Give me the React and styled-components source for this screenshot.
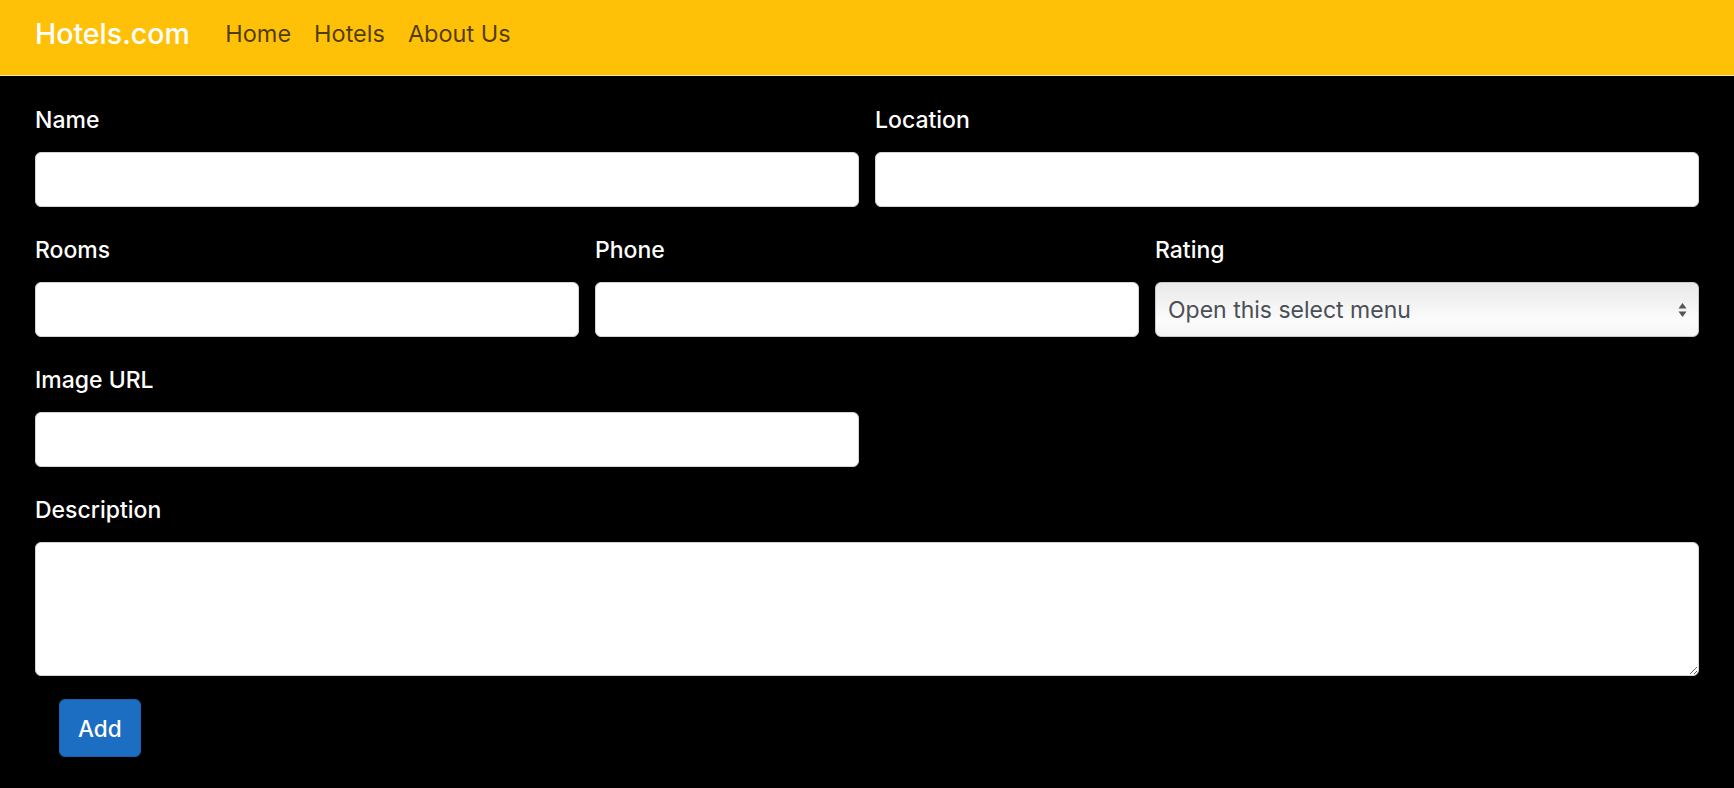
import React from 'react';
import styled, { createGlobalStyle } from 'styled-components';

const GlobalStyle = createGlobalStyle`
  body {
    margin: 0;
    background: #000;
    font-family: Inter, "Noto Sans", "Liberation Sans", sans-serif;
  }
  * {
    box-sizing: border-box;
  }
`;

const Navbar = styled.nav`
  display: flex;
  align-items: center;
  height: 76px;
  padding: 0 35px 8px;
  background-color: #ffc107;
  border-bottom: 1px solid #f3e3b0;
`;

const Brand = styled.a`
  font-size: 28.5px;
  font-weight: 500;
  color: #fff;
  text-decoration: none;
  margin-right: 24px;
`;

const NavLinks = styled.ul`
  display: flex;
  list-style: none;
  margin: 0;
  padding: 0;
`;

const NavLink = styled.a`
  display: block;
  padding: 0 11.5px;
  font-size: 23.5px;
  color: rgba(0, 0, 0, 0.7);
  text-decoration: none;
`;

const Main = styled.main`
  padding: 27px 35px;
`;

const Row = styled.div`
  display: grid;
  grid-template-columns: repeat(${props => props.cols}, 1fr);
  column-gap: 16px;
  margin-bottom: ${props => (props.last ? '23px' : '26px')};
`;

const Field = styled.div`
  display: flex;
  flex-direction: column;
`;

const Label = styled.label`
  font-size: 23px;
  line-height: 34px;
  font-weight: 500;
  color: #fff;
  margin-bottom: 15px;
`;

const Input = styled.input`
  height: 55px;
  padding: 0 17px;
  font: inherit;
  font-size: 22.5px;
  background: #fff;
  border: 1px solid #ced4da;
  border-radius: 6px;
  outline: none;
`;

const SelectWrap = styled.div`
  position: relative;
`;

const Select = styled.select`
  appearance: none;
  width: 100%;
  height: 55px;
  padding: 0 40px 0 12px;
  font: inherit;
  font-size: 23px;
  color: #4a4f55;
  background: linear-gradient(#e9e9e9, #fbfbfb 70%, #f4f4f4);
  border: 1px solid #c9c9c9;
  border-radius: 6px;
  outline: none;
`;

const Arrows = styled.svg`
  position: absolute;
  right: 12px;
  top: 50%;
  transform: translateY(-50%);
  pointer-events: none;
`;

const TextArea = styled.textarea`
  height: 134px;
  padding: 9px 17px;
  font: inherit;
  font-size: 22.5px;
  background: #fff;
  border: 1px solid #ced4da;
  border-radius: 6px;
  outline: none;
  resize: vertical;
`;

const Button = styled.button`
  height: 58px;
  margin-left: 24px;
  padding: 0 18px;
  font: inherit;
  font-size: 22.5px;
  font-weight: 500;
  color: #fff;
  background-color: #1b6ec2;
  border: 1px solid #1861ac;
  border-radius: 6px;
  cursor: pointer;
`;

const App = () => (
  <>
    <GlobalStyle />
    <Navbar>
      <Brand href="#">Hotels.com</Brand>
      <NavLinks>
        <li><NavLink href="#">Home</NavLink></li>
        <li><NavLink href="#">Hotels</NavLink></li>
        <li><NavLink href="#">About Us</NavLink></li>
      </NavLinks>
    </Navbar>
    <Main>
      <Row cols={2}>
        <Field>
          <Label>Name</Label>
          <Input type="text" />
        </Field>
        <Field>
          <Label>Location</Label>
          <Input type="text" />
        </Field>
      </Row>
      <Row cols={3}>
        <Field>
          <Label>Rooms</Label>
          <Input type="text" />
        </Field>
        <Field>
          <Label>Phone</Label>
          <Input type="text" />
        </Field>
        <Field>
          <Label>Rating</Label>
          <SelectWrap>
            <Select defaultValue="">
              <option value="">Open this select menu</option>
              <option value="1">1</option>
              <option value="2">2</option>
              <option value="3">3</option>
              <option value="4">4</option>
              <option value="5">5</option>
            </Select>
            <Arrows width="9" height="16" viewBox="0 0 9 16">
              <path d="M4.5 1 L8.5 6.5 H0.5 Z" fill="#555" />
              <path d="M4.5 15 L8.5 9.5 H0.5 Z" fill="#555" />
            </Arrows>
          </SelectWrap>
        </Field>
      </Row>
      <Row cols={2}>
        <Field>
          <Label>Image URL</Label>
          <Input type="text" />
        </Field>
      </Row>
      <Row cols={1} last>
        <Field>
          <Label>Description</Label>
          <TextArea />
        </Field>
      </Row>
      <Button type="button">Add</Button>
    </Main>
  </>
);

export default App;
